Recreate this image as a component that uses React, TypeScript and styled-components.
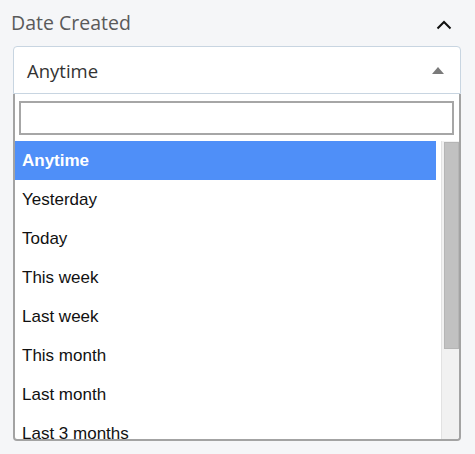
import React from "react";
import styled, { createGlobalStyle } from "styled-components";

const Global = createGlobalStyle`
  html, body { margin: 0; padding: 0; background: #f5f6f8; }
  * { box-sizing: border-box; }
`;

const Page = styled.div`
  width: 475px;
  height: 454px;
  padding: 0 14px 0 13px;
  background: #f5f6f8;
  overflow: hidden;
`;

const Header = styled.div`
  display: flex;
  align-items: center;
  justify-content: space-between;
  height: 44px;
  padding: 0 9px 0 0;
  margin-left: -2px;
  font-family: "Open Sans", sans-serif;
  font-size: 19.5px;
  color: #5a5a5a;
`;

const Chevron = styled.svg`
  margin-top: 5px;
`;

const SelectBox = styled.div`
  display: flex;
  align-items: center;
  justify-content: space-between;
  height: 48px;
  margin-top: 2px;
  padding: 0 16px 0 13px;
  background: #fff;
  border: 1px solid #c8d5e1;
  border-radius: 4px 4px 0 0;
  font-family: "Open Sans", sans-serif;
  font-size: 18.5px;
  color: #333;
`;

const Panel = styled.div`
  height: 347px;
  width: 448px;
  background: #fff;
  border: 2px solid #a3a3a3;
  border-top: none;
  border-radius: 0 0 4px 4px;
  display: flex;
  flex-direction: column;
  overflow: hidden;
`;

const SearchWrap = styled.div`
  padding: 7px 5px 6px 4px;
`;

const Search = styled.input`
  display: block;
  width: 100%;
  height: 34px;
  border: 2px solid #a6a6a6;
  outline: none;
  padding: 0 6px;
  font-family: "Liberation Sans", sans-serif;
  font-size: 16px;
`;

const ListRow = styled.div`
  display: flex;
  flex: 1;
  min-height: 0;
`;

const List = styled.ul`
  list-style: none;
  margin: 0;
  padding: 0;
  width: 423px;
  overflow: hidden;
`;

const Item = styled.li<{ $active?: boolean }>`
  height: 39px;
  display: flex;
  align-items: center;
  padding-left: 7px;
  font-family: "Liberation Sans", Arial, sans-serif;
  font-size: 17px;
  font-weight: ${(p) => (p.$active ? 700 : 400)};
  color: ${(p) => (p.$active ? "#fff" : "#111")};
  background: ${(p) => (p.$active ? "#4f8ff8" : "transparent")};
`;

const Track = styled.div`
  margin-left: 5px;
  width: 18px;
  background: #f1f1f1;
  border-left: 1px solid #e2e2e2;
  padding: 1px 0 0 2px;
`;

const Thumb = styled.div`
  width: 15px;
  height: 207px;
  background: #c1c1c1;
  border: 1px solid #b5b5b5;
`;

const options = [
  "Anytime",
  "Yesterday",
  "Today",
  "This week",
  "Last week",
  "This month",
  "Last month",
  "Last 3 months",
  "Last 6 months",
  "This year",
  "Last year",
];

export default function App() {
  return (
    <>
      <Global />
      <Page>
        <Header>
          <span>Date Created</span>
          <Chevron width="16" height="10" viewBox="0 0 16 10">
            <path d="M1.5 8.5 L8 2 L14.5 8.5" fill="none" stroke="#111" strokeWidth="2" />
          </Chevron>
        </Header>
        <SelectBox>
          <span>Anytime</span>
          <svg width="12" height="7" viewBox="0 0 12 7">
            <path d="M0 7 L6 0 L12 7 Z" fill="#7a7a7a" />
          </svg>
        </SelectBox>
        <Panel>
          <SearchWrap>
            <Search />
          </SearchWrap>
          <ListRow>
            <List>
              {options.map((o, i) => (
                <Item key={o} $active={i === 0}>
                  {o}
                </Item>
              ))}
            </List>
            <Track>
              <Thumb />
            </Track>
          </ListRow>
        </Panel>
      </Page>
    </>
  );
}
